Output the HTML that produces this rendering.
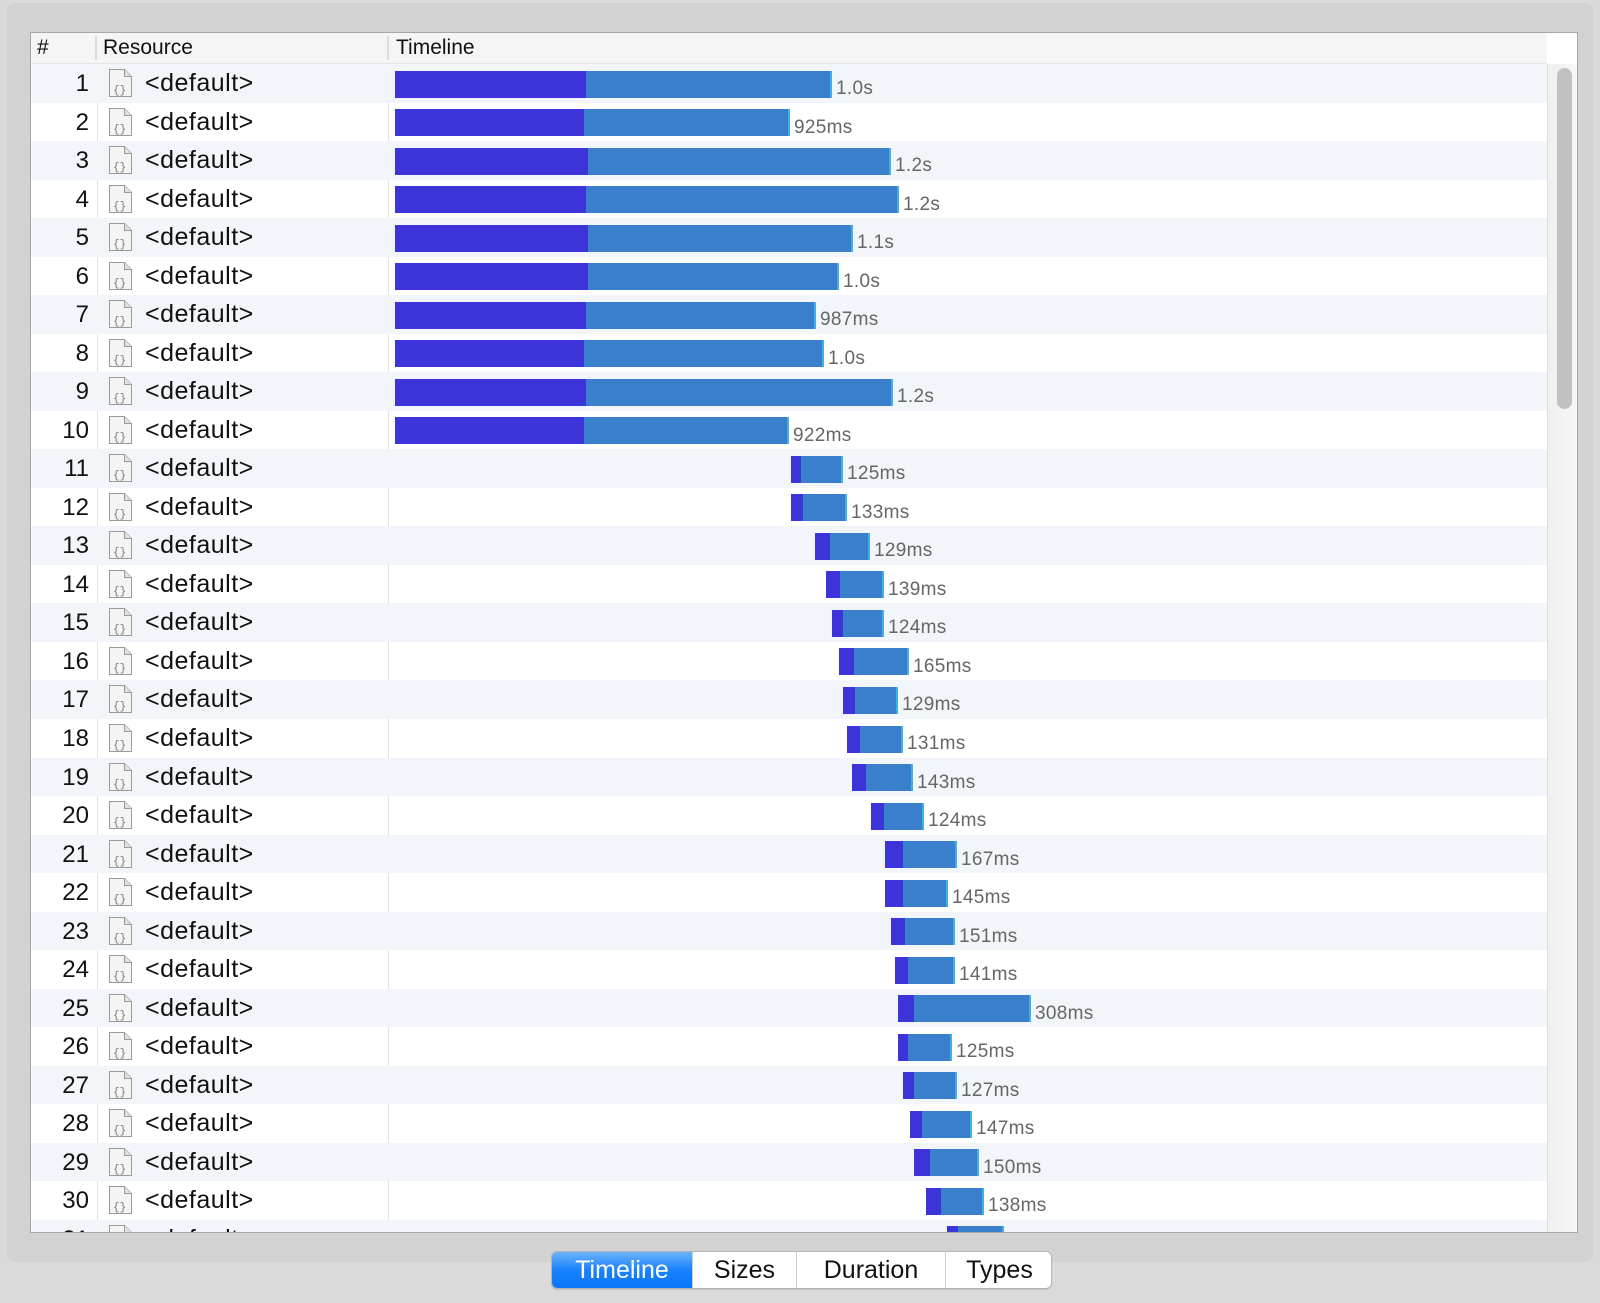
<!DOCTYPE html>
<html><head><meta charset="utf-8"><style>
*{margin:0;padding:0;box-sizing:border-box}
body{width:1600px;height:1303px;background:#dadada;position:relative;overflow:hidden;font-family:"Liberation Sans",sans-serif}
.panel{position:absolute;left:7px;top:3px;width:1586px;height:1259px;background:#d2d2d2;border-radius:8px}
.table{position:absolute;left:30px;top:32px;width:1548px;height:1201px;background:#fff;border:1px solid #a8a8a8;overflow:hidden}
.hdr{position:absolute;left:0;top:0;width:1516px;height:31px;background:#f5f5f5;border-bottom:1px solid #e6e6e6;font-size:21px;color:#111}
.hdr span{position:absolute;top:3px}
.hsep{position:absolute;top:3px;width:2px;height:24px;background:#dcdcdc}
.row{position:absolute;left:0;width:1516px;height:38.53px}
.row.odd{background:#f2f5fa}
.num{position:absolute;right:1458px;top:6px;font-size:24px;color:#111}
.ic{position:absolute;left:77px;top:4px}
.res{position:absolute;left:114px;top:5px;font-size:25px;color:#111;letter-spacing:0.5px}
.d{position:absolute;top:6.5px;height:27px;background:#3c33d9}
.l{position:absolute;top:6.5px;height:27px;background:#3a7fcc;border-right:2px solid #3fb0e8}
.t{position:absolute;top:14px;font-size:19px;color:#666;letter-spacing:0.3px}
.vline{position:absolute;top:31px;bottom:0;width:1px;background:#e2e2e2}
.sb{position:absolute;left:1516px;top:31px;width:30px;height:1170px;background:linear-gradient(90deg,#efefef,#f7f7f7);border-left:1px solid #ddd}
.thumb{position:absolute;left:9px;top:4px;width:15px;height:341px;background:#c1c1c1;border-radius:8px}
.seg{position:absolute;left:551px;top:1251px;width:501px;height:38px;border:1px solid #b5b5b5;border-radius:6px;background:#fff;overflow:hidden;font-size:25px;box-shadow:0 1px 1px rgba(0,0,0,.1)}
.seg div{position:absolute;top:0;height:36px;text-align:center;line-height:36px;color:#111;border-right:1px solid #d0d0d0}
.seg .on{background:linear-gradient(#6cb3fa,#1a82fb 50%,#0a76f8);color:#fff}
</style></head><body>
<div class="panel"></div>
<div class="table">
<div class="hdr"><span style="left:6px">#</span><div class="hsep" style="left:64px"></div><span style="left:72px">Resource</span><div class="hsep" style="left:356px"></div><span style="left:365px">Timeline</span></div>
<div class="vline" style="left:66px"></div><div class="vline" style="left:357px"></div>
<div id="rows"></div>
<div class="sb"><div class="thumb"></div></div>
</div>
<div class="seg">
<div class="on" style="left:0;width:141px">Timeline</div>
<div style="left:141px;width:104px">Sizes</div>
<div style="left:245px;width:149px">Duration</div>
<div style="left:394px;width:107px;border-right:none">Types</div>
</div>
<script>
var D=[[395,586,832,"1.0s"],[395,584,790,"925ms"],[395,588,891,"1.2s"],[395,586,899,"1.2s"],[395,588,853,"1.1s"],[395,588,839,"1.0s"],[395,586,816,"987ms"],[395,584,824,"1.0s"],[395,586,893,"1.2s"],[395,584,789,"922ms"],[791,801,843,"125ms"],[791,803,847,"133ms"],[815,830,870,"129ms"],[826,840,884,"139ms"],[832,843,884,"124ms"],[839,854,909,"165ms"],[843,855,898,"129ms"],[847,860,903,"131ms"],[852,866,913,"143ms"],[871,884,924,"124ms"],[885,903,957,"167ms"],[885,903,948,"145ms"],[891,905,955,"151ms"],[895,908,955,"141ms"],[898,914,1031,"308ms"],[898,908,952,"125ms"],[903,914,957,"127ms"],[910,922,972,"147ms"],[914,930,979,"150ms"],[926,941,984,"138ms"],[947,958,1004,"129ms"]];
var ic='<svg class="ic" width="26" height="30" viewBox="0 0 26 30"><path d="M1.5 1.5h15l7 7v20h-22z" fill="#f4f4f4" stroke="#9a9a9a"/><path d="M16.5 1.5v7h7" fill="#e0e0e0" stroke="#9a9a9a"/><text x="5" y="25" font-size="11" fill="#777" font-family="Liberation Mono">{}</text></svg>';
var h='';
for(var i=0;i<D.length;i++){var r=D[i],o=-31;
h+='<div class="row'+(i%2==0?' odd':'')+'" style="top:'+(31+i*38.53)+'px">'+
'<div class="num">'+(i+1)+'</div>'+ic+'<div class="res">&lt;default&gt;</div>'+
'<div class="d" style="left:'+(r[0]+o)+'px;width:'+(r[1]-r[0])+'px"></div>'+
'<div class="l" style="left:'+(r[1]+o)+'px;width:'+(r[2]-r[1])+'px"></div>'+
'<div class="t" style="left:'+(r[2]+o+4)+'px">'+r[3]+'</div></div>';}
document.getElementById('rows').innerHTML=h;
</script>
</body></html>
